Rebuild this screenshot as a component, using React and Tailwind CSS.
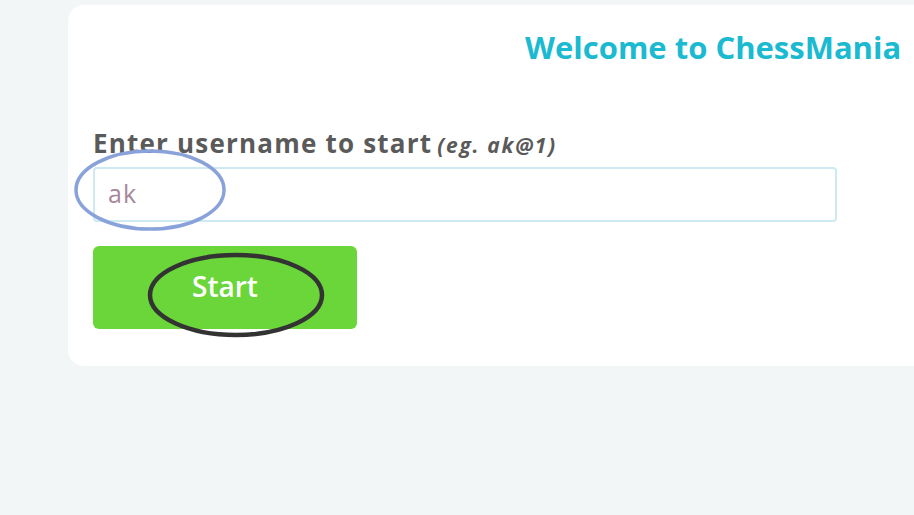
export default function App() {
  return (
    <div className="relative w-[914px] h-[515px] overflow-hidden bg-[#f3f6f7]" style={{ fontFamily: '"Open Sans", sans-serif' }}>
      <div className="ml-[68px] mt-[5px] w-[900px] h-[361px] bg-white rounded-[16px] pl-[25px] pt-[22px]">
        <h1 className="ml-[432px] text-[31px] leading-[40px] font-bold text-[#1bbad1]">Welcome to ChessMania</h1>
        <div className="mt-[59px] flex items-baseline gap-[5px] text-[#5a5a5a]">
          <span className="text-[26px] leading-[34px] font-bold tracking-[1.2px]">Enter username to start</span>
          <span className="text-[21px] italic font-bold tracking-[1.7px]">(eg. ak@1)</span>
        </div>
        <div className="mt-[5px] w-[744px] h-[55px] border-2 border-[#cde9f2] rounded-[4px] pl-[13px] flex items-center">
          <span className="text-[25px] tracking-[1px] text-[#a7889a]">ak</span>
        </div>
        <button className="mt-[24px] w-[264px] h-[83px] bg-[#6bd63a] rounded-[6px] text-white text-[28px] font-semibold flex items-center justify-center pb-[2px]">Start</button>
      </div>
      <svg className="absolute left-0 top-0" width="914" height="515">
        <ellipse cx="150" cy="190" rx="74" ry="39" fill="none" stroke="#89a3da" strokeWidth="3.5" />
        <ellipse cx="236" cy="295" rx="86" ry="40" fill="none" stroke="#333" strokeWidth="4.5" />
      </svg>
    </div>
  );
}
